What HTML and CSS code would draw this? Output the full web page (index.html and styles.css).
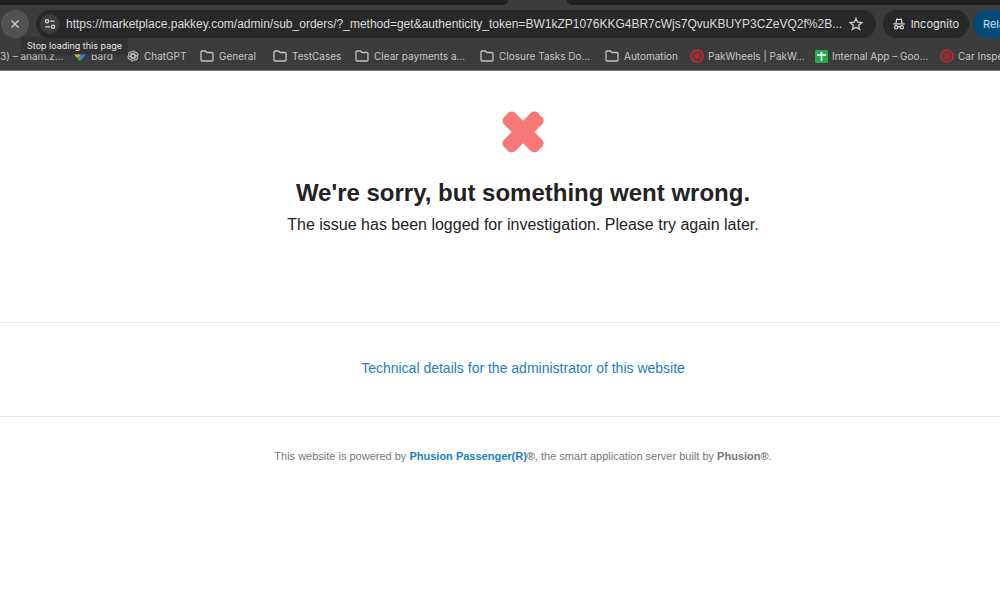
FILE: index.html
```
<!DOCTYPE html>
<html lang="en">
<head>
<meta charset="UTF-8">
<title>We're sorry, but something went wrong.</title>
<link rel="stylesheet" href="styles.css">
</head>
<body>
<svg class="defs" aria-hidden="true">
	<symbol id="folder" viewBox="0 0 14 12">
		<path d="M1 2.2V9.8Q1 11 2.2 11H11.8Q13 11 13 9.8V3.7Q13 2.5 11.8 2.5H7L5.5 1H2.2Q1 1 1 2.2Z" fill="none" stroke="#c4c4c4" stroke-width="1.3"/>
	</symbol>
	<symbol id="wheel" viewBox="0 0 14 14">
		<circle cx="7" cy="7" r="5.9" fill="none" stroke="#d0262e" stroke-width="1.5"/>
		<circle cx="7" cy="7" r="3.3" fill="none" stroke="#d0262e" stroke-width="1" stroke-dasharray="1.6 1"/>
		<circle cx="7" cy="7" r="1.2" fill="#d0262e"/>
		<path d="M7 3.500V10.500M3.500 7H10.500M4.500 4.500L9.500 9.500M9.500 4.500L4.500 9.500" stroke="#d0262e" stroke-width=".8"/>
	</symbol>
</svg>
<header class="browser">
	<div class="tabs"><span class="tab-left"></span><span class="tab-right"></span></div>
	<div class="toolbar">
		<button class="stop" aria-label="Stop loading this page">
			<svg width="10" height="10" viewBox="0 0 10 10"><path d="M1.500 1.500L8.500 8.500M8.500 1.500L1.500 8.500" stroke="#d0d0d0" stroke-width="1.300"/></svg>
		</button>
		<span class="tooltip" role="tooltip">Stop loading this page</span>
		<div class="address">
			<button class="site" aria-label="Site information">
				<svg width="12" height="12" viewBox="0 0 12 12" fill="none" stroke="#d6d6d6" stroke-width="1.300"><circle cx="3" cy="3.200" r="1.600"/><path d="M6.200 3.200H10.500M1.200 8.800H5.800"/><circle cx="9" cy="8.800" r="1.600"/></svg>
			</button>
			<input class="url" type="text" aria-label="Address" value="https://marketplace.pakkey.com/admin/sub_orders/?_method=get&amp;authenticity_token=BW1kZP1076KKG4BR7cWjs7QvuKBUYP3CZeVQ2f%2B...">
			<button class="star" aria-label="Bookmark this tab">
				<svg width="14" height="14" viewBox="0 0 14 14"><path d="M7 1.400L8.700 5.200L12.800 5.600L9.700 8.300L10.600 12.400L7 10.200L3.400 12.400L4.300 8.300L1.200 5.600L5.300 5.200Z" fill="none" stroke="#d0d0d0" stroke-width="1.300"/></svg>
			</button>
		</div>
		<button class="incognito">
			<svg width="12" height="12" viewBox="0 0 12 12" fill="none" stroke="#dedede" stroke-width="1.200"><path d="M3 5L3.700 1.200L6 1.700L8.300 1.200L9 5M.3 5.800H11.700M4.800 9Q6 8.200 7.200 9"/><circle cx="3.200" cy="9.300" r="1.600"/><circle cx="8.800" cy="9.300" r="1.600"/></svg>
			Incognito
		</button>
		<button class="relaunch">Relaunch to update</button>
	</div>
	<nav class="bookmarks">
		<a class="first" href="#">3) – anam.z...</a>
		<a class="bard" href="#"><svg width="12" height="12" viewBox="0 0 14 14"><path d="M0 5L7 3V13Z" fill="#3b82e8"/><path d="M0 5L7 3V7L3 8.500Z" fill="#e5b52c"/><path d="M7 3L14 5L7 13Z" fill="#3f7de0"/><path d="M3 8.500L7 13V7Z" fill="#39a45c"/></svg>Bard</a>
		<a class="chatgpt" href="#"><svg width="12" height="12" viewBox="0 0 24 24"><g fill="none" stroke="#c8c8c8" stroke-width="2"><path id="petal" d="M8 8V6A5 5 0 0 1 17 4M8 8V14L12 16.500"/><use href="#petal" transform="rotate(60 12 12)"/><use href="#petal" transform="rotate(120 12 12)"/><use href="#petal" transform="rotate(180 12 12)"/><use href="#petal" transform="rotate(240 12 12)"/><use href="#petal" transform="rotate(300 12 12)"/></g></svg>ChatGPT</a>
		<a class="general" href="#"><svg width="14" height="12"><use href="#folder"/></svg>General</a>
		<a class="testcases" href="#"><svg width="14" height="12"><use href="#folder"/></svg>TestCases</a>
		<a class="long" href="#"><svg width="14" height="12"><use href="#folder"/></svg>Clear payments a...</a>
		<a class="long" href="#"><svg width="14" height="12"><use href="#folder"/></svg>Closure Tasks Do...</a>
		<a class="automation" href="#"><svg width="14" height="12"><use href="#folder"/></svg>Automation</a>
		<a class="long app" href="#"><svg width="14" height="14"><use href="#wheel"/></svg>PakWheels | PakW...</a>
		<a class="long app" href="#"><svg width="13" height="13" viewBox="0 0 13 13"><rect width="13" height="13" rx="1" fill="#2da44f"/><path d="M6.500 2V11M2 5H11" stroke="#fff" stroke-width="1.600"/></svg>Internal App – Goo...</a>
		<a class="long app" href="#"><svg width="14" height="14"><use href="#wheel"/></svg>Car Inspection</a>
	</nav>
</header>
<main>
	<section class="message">
		<svg class="cross" width="42" height="42" viewBox="0 0 42 42"><g fill="#f87777"><rect x="-3" y="13" width="48" height="16" rx="5" transform="rotate(45 21 21)"/><rect x="-3" y="13" width="48" height="16" rx="5" transform="rotate(-45 21 21)"/></g></svg>
		<h1>We're sorry, but something went wrong.</h1>
		<p>The issue has been logged for investigation. Please try again later.</p>
	</section>
	<section class="details">
		<a href="#">Technical details for the administrator of this website</a>
	</section>
	<footer>This website is powered by <a href="#">Phusion Passenger(R)</a><b>®</b>, the smart application server built by <b>Phusion®</b>.</footer>
</main>
</body>
</html>
```
FILE: styles.css
```
*{box-sizing:border-box;}
body{margin:0;background:#fff;color:#222;font-family:"Liberation Sans",Arial,sans-serif;overflow-x:hidden;}
button{border:0;padding:0;font:inherit;color:inherit;display:flex;align-items:center;justify-content:center;flex:none;}
a{text-decoration:none;}
svg{flex:none;}
.defs{position:absolute;width:0;height:0;}

.browser{background:#3c3c3c;color:#e3e3e3;font-family:Inter,sans-serif;overflow:hidden;border-bottom:1px solid #777;}
.tabs{display:flex;justify-content:space-between;height:5px;}
.tab-left{width:508px;background:#1f2120;border-bottom-right-radius:8px;}
.tab-right{width:calc(100% - 567px);background:#1f2120;border-bottom-left-radius:8px;}
.toolbar{display:flex;align-items:center;height:37px;position:relative;}
.stop{width:28px;height:28px;margin:0 7px 0 1px;border-radius:14px;background:#525252;}
.address{flex:1;min-width:0;display:flex;align-items:center;height:28px;border-radius:14px;background:#282828;padding:0 13px 0 4px;}
.site{width:20px;height:20px;border-radius:10px;background:#3c3c3c;}
.url{flex:1;min-width:0;border:0;padding:0;margin:0 6px;background:none;color:#dcdcdc;font:12px "Liberation Sans",Arial,sans-serif;outline:0;}
.star{background:none;}
.incognito{height:28px;gap:6px;padding:0 10px;margin-left:7px;border-radius:14px;background:#282828;font-size:11px;}
.relaunch{width:27px;height:28px;margin-left:4px;padding-left:10px;border-radius:14px 0 0 14px;background:#004a77;color:#c2e7ff;font-size:11px;overflow:hidden;justify-content:flex-start;white-space:nowrap;}
.tooltip{position:absolute;left:22px;top:33px;z-index:1;height:16px;padding:0 5px;line-height:16px;background:#323232;box-shadow:0 0 2px #222;color:#e6e6e6;font-size:9px;white-space:nowrap;}
.bookmarks{display:flex;height:28px;font-size:10px;white-space:nowrap;}
.bookmarks a{display:flex;align-items:center;gap:5px;flex:none;color:#c7c7c7;}
.first{width:74px;}
.bard{width:53px;}
.bookmarks .chatgpt{width:73px;}
.general{width:73px;}
.testcases{width:82px;}
.long{width:125px;}
.automation{width:85px;}
.bookmarks .app{gap:4px;}

main{text-align:center;}
.message{padding:40px 0 87px 46px;border-bottom:1px solid #e8e8e8;}
.cross{display:block;margin:0 auto;}
h1{margin:24px 0 0;font-size:24px;line-height:32px;}
.message p{margin:6px 0 0;font-size:16px;line-height:20px;}
.details{padding:35px 0 38px 46px;border-bottom:1px solid #e5e5e5;font-size:14px;line-height:20px;}
.details a{color:#1a7fc1;}
footer{padding:32px 0 32px 46px;font-size:11px;line-height:14px;color:#777;}
footer a{color:#1a7fc1;font-weight:bold;}
```
